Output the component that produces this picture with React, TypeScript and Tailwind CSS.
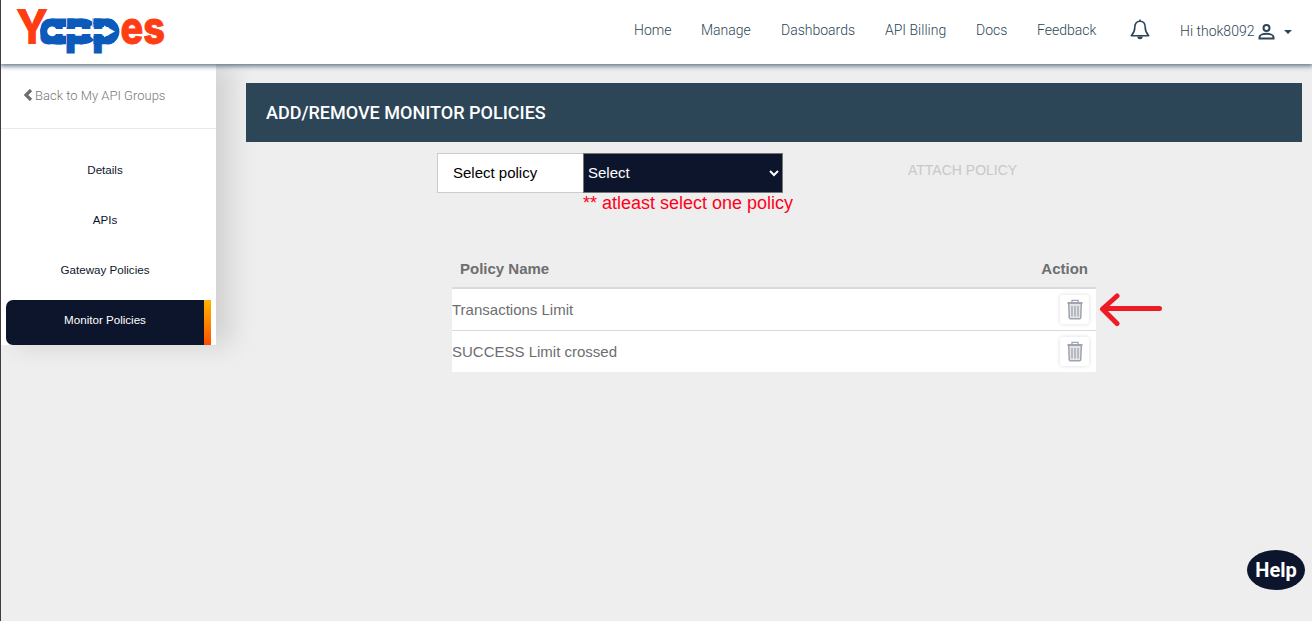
import React from "react";

const navItems = [
  { label: "Home", cls: "w-[67px]" },
  { label: "Manage", cls: "w-[80px]" },
  { label: "Dashboards", cls: "w-[104px]" },
  { label: "API Billing", cls: "w-[91px]" },
  { label: "Docs", cls: "w-[61px]" },
  { label: "Feedback", cls: "w-[93px]" },
];

function Logo() {
  return (
    <svg width="152" height="50" viewBox="15 6 152 50" className="block overflow-visible" fontFamily="Inter, sans-serif" fontWeight="800">
      <text x="15.5" y="44" fontSize="48" fill="#ff3d12" textLength="33" lengthAdjust="spacingAndGlyphs">Y</text>
      <text x="39.5" y="44" fontSize="46" fill="#0c5abc" stroke="#0c5abc" strokeWidth=".8" textLength="79.5" lengthAdjust="spacingAndGlyphs">app</text>
      <text x="120.5" y="44" fontSize="45" fill="#ff3d12" stroke="#ff3d12" strokeWidth=".8" textLength="44.5" lengthAdjust="spacingAndGlyphs">es</text>
      <g fill="none" stroke="#0c5abc" strokeWidth="8.5">
        <path d="M66 22.7H53A8.7 8.7 0 0 0 53 40.1H66" />
        <path d="M67.5 22.7H82Q88 22.7 91 26M67.5 40.1H82Q88 40.1 91 37" />
        <path d="M93.5 22.7H106.5A8.7 8.7 0 0 1 106.5 40.1H93.5" />
      </g>
      <path d="M66.7 18V27M92.5 18V27" stroke="#b9d1ed" strokeWidth="1" />
      <circle cx="52" cy="31.4" r="4.8" fill="#fff" />
      <path d="M52 29H104V25.5L115 31.4L104 37.3V34H52Z" fill="#fff" />
    </svg>
  );
}

function Bell() {
  return (
    <svg width="20" height="22" viewBox="0 0 20 22" fill="none" stroke="#2c4658" strokeWidth="1.6">
      <path d="M10 2.2C6.4 2.2 4.8 5 4.8 8.2C4.8 13 3.4 14.5 1.3 16.8H18.7C16.6 14.5 15.2 13 15.2 8.2C15.2 5 13.6 2.2 10 2.2Z" strokeLinejoin="round" />
      <path d="M10 .4V2" />
      <path d="M7.3 17.5A2.7 2.7 0 0 0 12.7 17.5Z" fill="#2c4658" stroke="none" />
    </svg>
  );
}

function Trash() {
  return (
    <svg width="16" height="21" viewBox="0 0 16 21" fill="none" stroke="#a0a4ae">
      <path d="M5 3V1.4H11V3" strokeWidth="1.3" />
      <path d="M.5 4H15.5" strokeWidth="2" />
      <path d="M1.7 5L2.3 19Q2.4 19.8 3.2 19.8H12.8Q13.6 19.8 13.7 19L14.3 5" fill="#e4e5e9" strokeWidth="1.5" />
      <path d="M5 7V17.5M8 7V17.5M11 7V17.5" strokeWidth="1.3" />
    </svg>
  );
}

function DeleteButton() {
  return (
    <button className="flex h-[29px] w-[29px] items-center justify-center rounded-[3px] bg-white shadow-[0_0_4px_rgba(0,0,0,0.14)]">
      <Trash />
    </button>
  );
}

export default function App() {
  return (
    <div className="relative flex h-[621px] w-[1312px] flex-col overflow-hidden border-l border-[#453a40] bg-[#eeeeee] font-['Liberation_Sans',sans-serif]">
      <header className="relative z-10 flex h-16 shrink-0 bg-white pl-3.5 pt-1.5 shadow-[0_1px_5px_1px_#5b7180]">
        <Logo />
        <nav className="ml-[467px] flex pt-[14px] font-['Roboto',sans-serif] text-[14px] font-light leading-[21px] text-[#2c4658]">
          {navItems.map((n) => (
            <a key={n.label} className={n.cls + " whitespace-nowrap"}>{n.label}</a>
          ))}
        </nav>
        <div className="pt-[13px]"><Bell /></div>
        <div className="ml-[30px] flex pt-[15px] font-['Roboto',sans-serif] text-[14px] font-light leading-[21px] text-[#2c4658]">
          <span className="w-[77px] whitespace-nowrap">Hi thok8092</span>
          <svg width="18" height="18" viewBox="0 0 18 18" className="mt-0.5" fill="none" stroke="#2c4658" strokeWidth="2">
            <circle cx="9.5" cy="5" r="3" />
            <path d="M2.5 15.5V14C2.5 11.8 6.5 10.8 9.5 10.8S16.5 11.8 16.5 14V15.5Z" />
          </svg>
          <svg width="8" height="4" viewBox="0 0 8 4" className="ml-[9px] mt-[9px]"><path d="M0 0H8L4 4Z" fill="#2c4658" /></svg>
        </div>
      </header>

      <div className="flex">
        <aside className="flex h-[281px] w-[215px] flex-col bg-white text-[11.6px] text-[#0d152c] shadow-[15px_0_25px_rgba(0,0,0,0.12)]">
          <div className="flex h-[65px] shrink-0 border-b border-[#e9e9e9] pl-[22px] pt-[22px] font-['Roboto',sans-serif] text-[13px] font-light leading-5 text-[#777]">
            <svg width="10" height="12" viewBox="0 0 10 12" className="mr-[2px] mt-[3px]"><path d="M8 1L3 6L8 11" fill="none" stroke="#6d6e70" strokeWidth="3.2" /></svg>
            <span className="whitespace-nowrap">Back to My API Groups</span>
          </div>
          <div className="flex h-[171px] flex-col items-center pr-[7px] pt-[30px] leading-[22px]">
            <span className="h-[50px]">Details</span>
            <span className="h-[50px]">APIs</span>
            <span>Gateway Policies</span>
          </div>
          <div className="ml-[5px] flex h-[45px] w-[205px] overflow-hidden rounded-l-[7px] bg-[#0d152c] text-white">
            <span className="flex-1 pt-[9px] text-center leading-[22px]">Monitor Policies</span>
            <span className="w-[7px] bg-linear-to-b from-[#ffb300] to-[#ff4a00]" />
          </div>
        </aside>

        <main className="relative ml-[30px] flex w-[1056px] flex-col pt-[19px]">
          <h1 className="flex h-[59px] items-center bg-[#2c4658] pl-5 font-['Roboto',sans-serif] text-[18.03px] font-medium text-white">ADD/REMOVE MONITOR POLICIES</h1>
          <div className="flex pl-[191px] pt-[11px] text-[15px]">
            <div className="flex h-10 w-[146px] items-center border border-r-0 border-[#ccc] bg-white pl-[15px] text-black">Select policy</div>
            <div className="w-[200px]">
              <div className="flex h-10 items-center justify-between border border-[#767676] bg-[#0d152c] pl-1 pr-[3px] text-white">
                <span>Select</span>
                <svg width="10" height="8" viewBox="0 0 10 8"><path d="M1 2L5 6L9 2" fill="none" stroke="#fff" strokeWidth="2" /></svg>
              </div>
              <p className="whitespace-nowrap text-[18px] leading-5 text-[#ff0019]">** atleast select one policy</p>
            </div>
            <button className="ml-[125px] h-[34px] whitespace-nowrap text-[14px] text-[#c8c8c8]">ATTACH POLICY</button>
          </div>
          <div className="ml-[206px] mt-9 flex w-[644px] flex-col text-[15px] text-[#6d6e70]">
            <div className="flex h-[40px] items-center justify-between border-b-2 border-[#dadada] pl-2 pr-2 pt-0.5 font-bold">
              <span>Policy Name</span>
              <span>Action</span>
            </div>
            <div className="flex h-[42px] items-center justify-between border-b border-[#dadada] bg-white pr-[7px]">
              <span className="pt-0.5">Transactions Limit</span>
              <DeleteButton />
            </div>
            <div className="flex h-[41px] items-center justify-between bg-white pr-[7px]">
              <span className="pt-0.5">SUCCESS Limit crossed</span>
              <DeleteButton />
            </div>
          </div>
        </main>
      </div>

      <svg width="66" height="36" viewBox="0 0 66 36" className="absolute left-[1098px] top-[292px]" fill="none" stroke="#ed1c24" strokeWidth="5" strokeLinecap="round" strokeLinejoin="round">
        <path d="M60.5 16.5H4M18 4L3.5 17L18 31.5" />
      </svg>
      <button className="absolute left-[1246px] top-[550px] h-10 w-[58px] rounded-[50%] bg-[#0d152c] font-['Roboto',sans-serif] text-[20px] font-bold text-white">Help</button>
    </div>
  );
}
